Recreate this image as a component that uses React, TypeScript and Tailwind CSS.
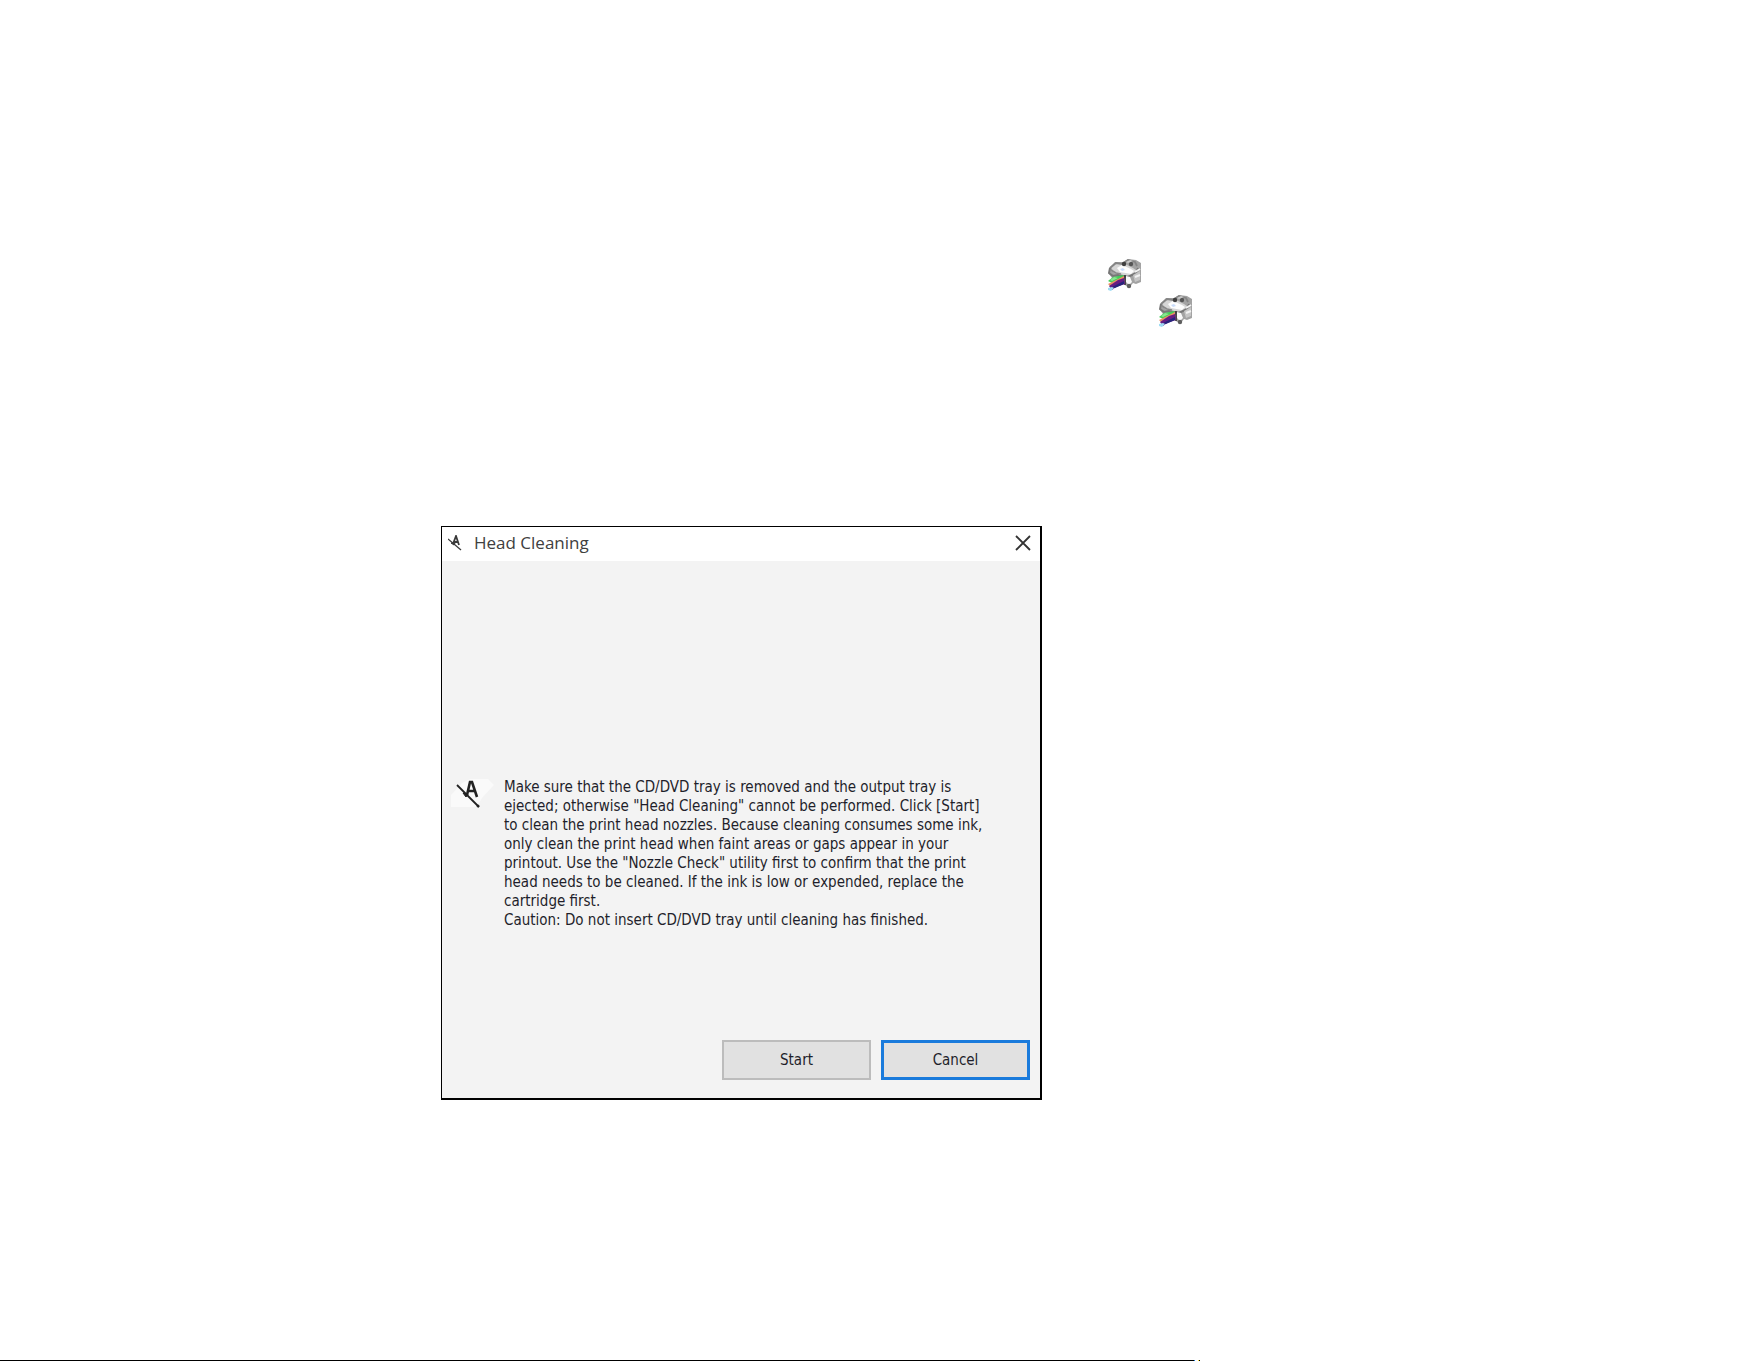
import React from 'react';

const message = [
    'Make sure that the CD/DVD tray is removed and the output tray is',
    'ejected; otherwise "Head Cleaning" cannot be performed. Click [Start]',
    'to clean the print head nozzles. Because cleaning consumes some ink,',
    'only clean the print head when faint areas or gaps appear in your',
    'printout. Use the "Nozzle Check" utility first to confirm that the print',
    'head needs to be cleaned. If the ink is low or expended, replace the',
    'cartridge first.',
    'Caution: Do not insert CD/DVD tray until cleaning has finished.',
];

function PrinterIcon() {
    return (
        <svg viewBox="0 0 33 32" className="h-8 w-[33px]" aria-hidden="true">
            <path d="M1 9 L7 3 L15 3 L20 0 L28 1 L33 4 V23 L28 25 L25 24 L21 29 L17 26 V20 L4 19 L1 15Z" fill="#a3a3a3" />
            <path d="M3 8 L9 4 L15 4 L25 9 L29 12 L24 16 L15 17 L6 14Z" fill="#d6d6d6" />
            <path d="M9 9 L14 6 L23 10 L26 12 L23 15 L12 13Z" fill="#fdfdfd" />
            <path d="M12 10 L15 9 L17 11 L14 12Z" fill="#c9dcfa" />
            <path d="M2 9 L8 4 L14 5 L20 1 L27 3 L29 7" fill="none" stroke="#858585" strokeWidth="1.8" />
            <path d="M2 9 L1 14 L5 17 L10 16 L20 18 L28 14 L30 9" fill="none" stroke="#777" strokeWidth="2" />
            <path d="M3 11 L8 14 L13 15" fill="none" stroke="#888" strokeWidth="1.5" />
            <circle cx="16" cy="5" r="2.2" fill="#3f3f3f" />
            <circle cx="23" cy="5" r="2.2" fill="#555" />
            <path d="M18 3 L22 1 L25 2 L20 4Z" fill="#c9c9c9" />
            <path d="M18 17 L22 18 L24 23 L21 26 L18 23Z" fill="#fafafa" />
            <path d="M25 16 L32 12 V21 L27 23Z" fill="#c6c6c6" />
            <path d="M27 13 L32 10 M27 18 L32 16" stroke="#f2f2f2" strokeWidth="2" />
            <path d="M17 16 V26" stroke="#333" strokeWidth="1.6" />
            <circle cx="21" cy="27" r="2.2" fill="#5e5e5e" />
            <path d="M0 22 L5 18 L16 16 L14 19 L4 24Z" fill="#42cf57" />
            <path d="M2 21 L6 18 L10 19 L4 22Z" fill="#8be592" />
            <path d="M0 25 L10 20 L16 17 V21 L3 28Z" fill="#ea8f62" />
            <path d="M1 27 L10 21 L16 19 L17 25 L8 28 L4 31Z" fill="#671d83" />
            <path d="M4 28 L16 22 V25 L7 29Z" fill="#26257c" />
            <path d="M0 29 L4 28 L6 29 L3 32 L0 31Z" fill="#9edcf3" />
        </svg>
    );
}

function CleaningIcon() {
    return (
        <svg viewBox="0 0 14 16" className="h-4 w-[14px]" fill="none" stroke="#3a3a3a" aria-hidden="true">
            <path d="M5 9 L8 1 L11 10 M6 7 H10" strokeWidth="1.8" />
            <path d="M0 4 L13 15" strokeWidth="1.3" />
            <path d="M3 8 L7 8 L6 10Z" fill="#3a3a3a" />
        </svg>
    );
}

export default function App() {
    return (
        <div className="flex min-h-screen flex-col bg-white">
            <div className="flex flex-col gap-1 pt-[259px]">
                <div className="pl-[1108px]">
                    <PrinterIcon />
                </div>
                <div className="pl-[1159px]">
                    <PrinterIcon />
                </div>
            </div>

            <section
                aria-labelledby="dialog-title"
                className="mt-[199px] ml-[441px] flex w-[601px] flex-col border-2 border-t border-l border-black bg-[#f3f3f3]"
            >
                <header className="flex h-[34px] items-center bg-white pr-2 pb-0.5 pl-1.5">
                    <CleaningIcon />
                    <h1 id="dialog-title" className="ml-3 font-['Open_Sans',sans-serif] text-[17px] text-[#404040]">
                        Head Cleaning
                    </h1>
                    <button type="button" aria-label="Close" className="ml-auto flex">
                        <svg viewBox="0 0 18 18" className="size-[18px]" fill="none" stroke="#333" strokeWidth="1.8">
                            <path d="M2 2 L16 16 M16 2 L2 16" />
                        </svg>
                    </button>
                </header>

                <div className="flex gap-2.5 pt-[217px] pl-2 font-['DejaVu_Sans_Condensed','DejaVu_Sans',sans-serif] text-[15px]">
                    <svg viewBox="0 0 44 32" className="h-8 w-11 shrink-0" aria-hidden="true">
                        <path d="M1 29 V17 L12 5 L20 1 H38 L44 7 L32 20 L27 29Z" fill="#fafafa" />
                        <g fill="none" stroke="#222">
                            <path d="M17 17 L20 4 H22 L27 19 M18 13 H25" strokeWidth="2.6" />
                            <path d="M7 7 L29 29" strokeWidth="1.8" />
                            <path d="M13 15 L18 16 L16 19Z" fill="#222" />
                            <circle cx="28" cy="28" r="1" fill="#222" />
                        </g>
                    </svg>
                    <p className="leading-[19px] text-[#1f1f2b]">
                        {message.map((line) => (
                            <span key={line} className="block whitespace-nowrap">
                                {line}
                            </span>
                        ))}
                    </p>
                </div>

                <footer className="mt-[110px] flex justify-end gap-2.5 pr-2.5 pb-[18px] font-['DejaVu_Sans_Condensed','DejaVu_Sans',sans-serif] text-[15px] text-[#1f1f2b]">
                    <button type="button" className="h-10 w-[149px] border-2 border-[#bcbcbc] bg-[#e1e1e1]">
                        Start
                    </button>
                    <button type="button" className="h-10 w-[149px] border-3 border-[#1a7bdc] bg-[#e1e1e1]">
                        Cancel
                    </button>
                </footer>
            </section>

            <div className="mt-auto flex h-px">
                <div className="w-[1194px] bg-black" />
                <div className="w-px bg-[#1a7bdc]" />
                <div className="ml-[3px] w-px bg-yellow-300" />
                <div className="w-px bg-black" />
            </div>
        </div>
    );
}
